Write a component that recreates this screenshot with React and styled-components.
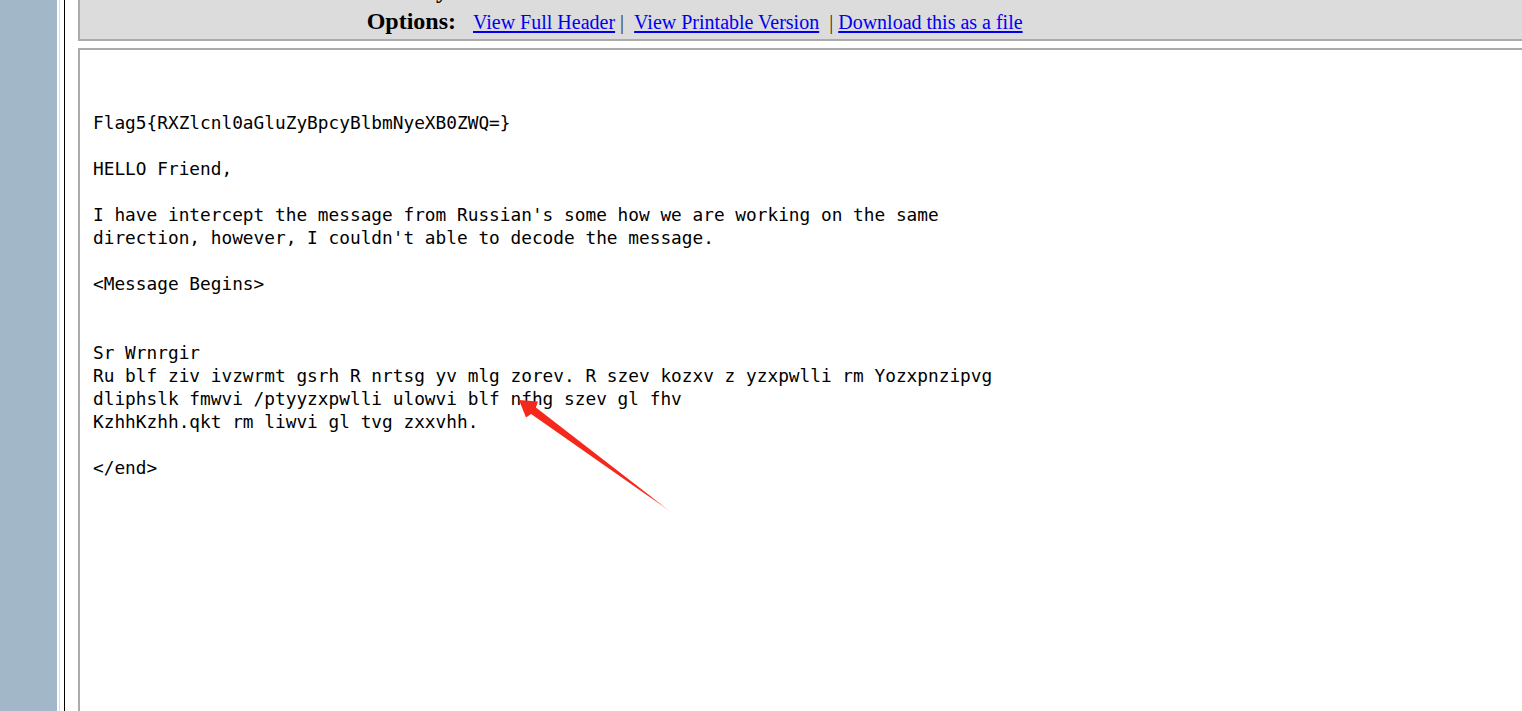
import styled, { createGlobalStyle } from "styled-components";

const Global = createGlobalStyle`
  html, body {
    margin: 0;
    padding: 0;
    background: #fff;
  }
`;

const Page = styled.div`
  position: relative;
  display: flex;
  width: 1522px;
  height: 711px;
  overflow: hidden;
  background: #fff;
`;

const Sidebar = styled.div`
  flex: 0 0 57px;
  background: #a2b8c9;
`;

const FrameEdge = styled.div`
  flex: 0 0 8px;
  background: linear-gradient(
    to right,
    #fff 0 2px,
    #e2dcdc 2px 3px,
    #fff 3px 7px,
    #000 7px 8px
  );
`;

const Main = styled.div`
  flex: 1;
  display: flex;
  flex-direction: column;
  gap: 7px;
  padding-left: 13px;
  margin-right: -20px;
`;

const HeaderBox = styled.div`
  margin-top: -27px;
  background: #dcdcdc;
  border: 2px solid #ababab;
  padding-bottom: 2px;
  display: grid;
  grid-template-columns: 376px 1fr;
  grid-auto-rows: 31px;
  column-gap: 17px;
  align-items: baseline;
`;

const Label = styled.div`
  font-family: "Liberation Serif", "Times New Roman", serif;
  font-weight: 700;
  font-size: 24px;
  line-height: 31px;
  color: #000;
  text-align: right;
`;

const Value = styled.div`
  font-family: "Liberation Serif", "Times New Roman", serif;
  font-size: 20px;
  line-height: 31px;
  color: #000;
  white-space: nowrap;
`;

const Link = styled.a`
  color: #0000ee;
  text-decoration: underline;
  text-underline-offset: 2px;
`;

const Sep = styled.span`
  color: #3a2a10;
  margin-left: ${(p) => p.$before}px;
  margin-right: ${(p) => p.$after}px;
`;

const MessageBox = styled.div`
  border: 2px solid #ababab;
  min-height: 900px;
  padding: 61px 13px;
  background: #fff;
`;

const Body = styled.pre`
  margin: 0;
  font-family: "DejaVu Sans Mono", "Liberation Mono", monospace;
  font-size: 17.8px;
  line-height: 23px;
  color: #000;
`;

const Overlay = styled.svg`
  position: absolute;
  left: 0;
  top: 0;
  pointer-events: none;
`;

const message = `Flag5{RXZlcnl0aGluZyBpcyBlbmNyeXB0ZWQ=}

HELLO Friend,

I have intercept the message from Russian's some how we are working on the same
direction, however, I couldn't able to decode the message.

<Message Begins>


Sr Wrnrgir
Ru blf ziv ivzwrmt gsrh R nrtsg yv mlg zorev. R szev kozxv z yzxpwlli rm Yozxpnzipvg
dliphslk fmwvi /ptyyzxpwlli ulowvi blf nfhg szev gl fhv
KzhhKzhh.qkt rm liwvi gl tvg zxxvhh.

</end>`;

const Arrow = () => (
  <Overlay width="1522" height="711" viewBox="0 0 1522 711">
    <defs>
      <linearGradient id="fade" x1="519" y1="400" x2="671" y2="512" gradientUnits="userSpaceOnUse">
        <stop offset="0" stopColor="#f5281c" />
        <stop offset="0.85" stopColor="#f5281c" />
        <stop offset="1" stopColor="#f5281c" stopOpacity="0.35" />
      </linearGradient>
    </defs>
    <polygon
      points="519,400 538,401.4 535.9,407.5 671,512 531.1,413.9 526,417.5"
      fill="url(#fade)"
    />
  </Overlay>
);

export default function App() {
  return (
    <>
      <Global />
      <Page>
        <Sidebar />
        <FrameEdge />
        <Main>
          <HeaderBox>
            <Label>Priority:</Label>
            <Value>Normal</Value>
            <Label>Options:</Label>
            <Value>
              <Link href="#">View Full Header</Link>
              <Sep $before={5} $after={10}>|</Sep>
              <Link href="#">View Printable Version</Link>
              <Sep $before={10} $after={5}>|</Sep>
              <Link href="#">Download this as a file</Link>
            </Value>
          </HeaderBox>
          <MessageBox>
            <Body>{message}</Body>
          </MessageBox>
        </Main>
        <Arrow />
      </Page>
    </>
  );
}
